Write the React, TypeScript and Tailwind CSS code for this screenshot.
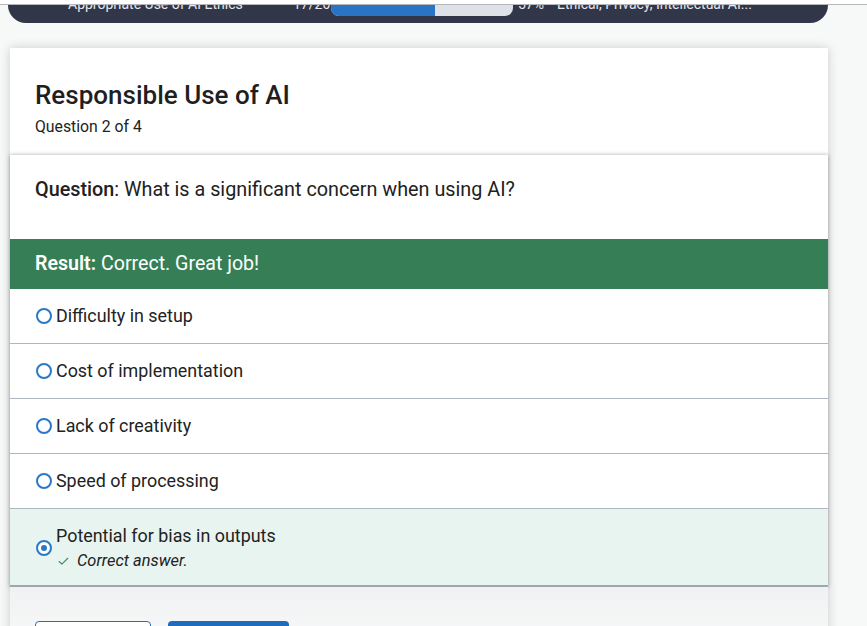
import { Check } from "lucide-react";

const options = [
  "Difficulty in setup",
  "Cost of implementation",
  "Lack of creativity",
  "Speed of processing",
];

function Radio({ checked }: { checked?: boolean }) {
  return (
    <span className="flex h-[16px] w-[16px] shrink-0 items-center justify-center rounded-full border-2 border-[#2a78c9] bg-white">
      {checked ? <span className="h-[6px] w-[6px] rounded-full bg-[#2a78c9]" /> : null}
    </span>
  );
}

export default function App() {
  return (
    <div className="min-h-[626px] overflow-hidden bg-[#f7f8f8] font-['Roboto','Liberation_Sans',sans-serif] text-[#212121]">
      <div className="h-[5px] border-b border-[#b4b6ba] bg-white" />

      <div className="ml-[8px] flex h-[18px] w-[820px] items-start overflow-hidden rounded-b-[22px] bg-[#313649] text-[14px] text-[#e6e8ee]">
        <div className="-mt-[13px] flex items-center">
          <span className="ml-[60px] w-[225px] whitespace-nowrap leading-[20px]">Appropriate Use of AI Ethics</span>
          <span className="w-[38px] whitespace-nowrap leading-[20px]">17/20</span>
          <span className="flex h-[24px] w-[182px] overflow-hidden rounded-[8px] bg-[#dde2e8]">
            <span className="h-full w-[104px] bg-[#2a74c6]" />
          </span>
          <span className="ml-[5px] w-[39px] whitespace-nowrap leading-[20px]">57%</span>
          <span className="whitespace-nowrap leading-[20px]">Ethical, Privacy, Intellectual AI...</span>
        </div>
      </div>

      <div className="ml-[10px] mt-[25px] w-[818px] bg-white shadow-[0_0_10px_rgba(0,0,0,0.18)]">
        <div className="px-[25px] pb-[16px] pt-[32px]">
          <h1 className="text-[26px] font-medium leading-[30px] text-[#1f1f1f]">Responsible Use of AI</h1>
          <p className="mt-[7px] text-[15.8px] leading-[20px] text-[#222]">Question 2 of 4</p>
        </div>

        <div className="mt-[2px] bg-white shadow-[0_0_4px_rgba(0,0,0,0.35)]">
          <div className="px-[25px] pb-[36px] pt-[22px] text-[19.8px] leading-[26px]">
            <span className="font-medium">Question</span>: What is a significant concern when using AI?
          </div>

          <div className="flex h-[50px] items-center bg-[#367f56] px-[25px] text-[19.6px] text-white">
            <span className="font-semibold">Result:</span>
            <span className="ml-[5px]">Correct. Great job!</span>
          </div>

          {options.map((label) => (
            <div
              key={label}
              className="flex h-[55px] items-center gap-[4px] border-b border-[#aeb6c4] px-[26px] text-[17.9px] text-[#222]"
            >
              <Radio />
              <span>{label}</span>
            </div>
          ))}

          <div className="flex h-[78px] items-center gap-[4px] border-b-2 border-[#9ea6b0] bg-[#e8f4f0] px-[26px]">
            <span className="mt-[2px]">
              <Radio checked />
            </span>
            <div className="mt-[4px]">
              <div className="text-[17.9px] leading-[24px] text-[#222]">Potential for bias in outputs</div>
              <div className="flex items-center gap-[7px] text-[16.4px] italic leading-[26px] text-[#222]">
                <Check size={13} strokeWidth={2} className="ml-[1px] text-[#3d8a5c]" />
                <span>Correct answer.</span>
              </div>
            </div>
          </div>
        </div>

        <div className="flex gap-[17px] bg-gradient-to-b from-[#f0f1f2] to-[#fbfbfb] px-[25px] pb-[10px] pt-[34px]">
          <button className="h-[36px] w-[116px] rounded-[4px] border border-[#2a6ebb] bg-white text-[15px] text-[#1f6bbd]">
            Previous
          </button>
          <button className="h-[36px] w-[121px] rounded-[4px] bg-[#1f6bbd] text-[15px] text-white">
            Next
          </button>
        </div>
      </div>
    </div>
  );
}
